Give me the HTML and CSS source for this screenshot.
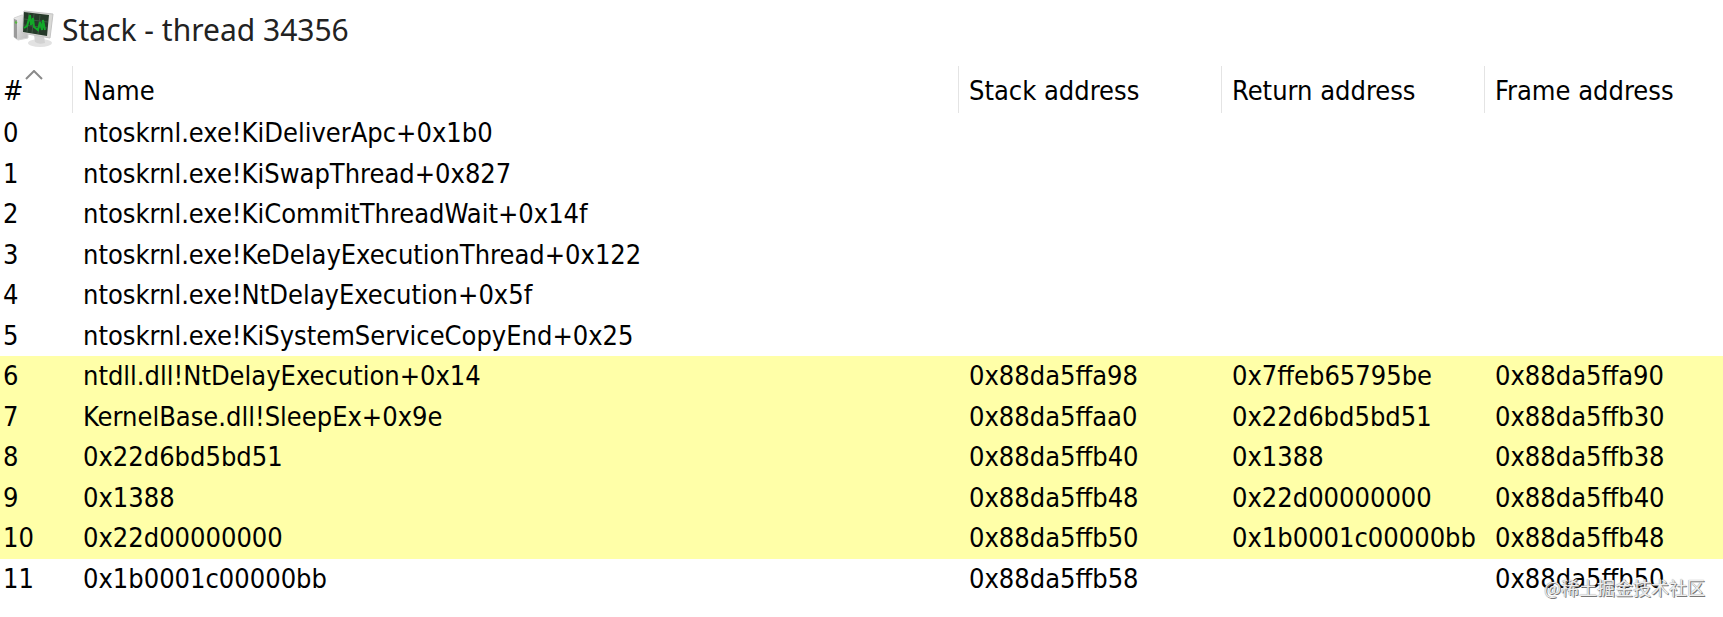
FILE: index.html
```html
<!DOCTYPE html>
<html lang="en">
<head>
  <meta charset="UTF-8" />
  <meta name="viewport" content="width=device-width, initial-scale=1.0" />
  <title>Stack - thread 34356</title>
  <link rel="stylesheet" href="styles.css">
</head>
<body>
  <!-- Title bar -->
  <header class="titlebar">
    <svg class="app-icon" viewBox="0 0 42 38" aria-hidden="true">
      <defs>
        <linearGradient id="caseFill" x1="0" x2="1" y1="0" y2="1">
          <stop offset="0" stop-color="#f0f0f0" />
          <stop offset="1" stop-color="#b9b9b9" />
        </linearGradient>
      </defs>
      <path d="M2 8 L10 5 L16 7 V28 L6 30 L2 27 Z" fill="url(#caseFill)" stroke="#d4d4d4" />
      <path d="M2 9 L5 10 V29 L2 27 Z" fill="#9a9a9a" />
      <path d="M3 12 L5 13" stroke="#58b840" stroke-width="2" />
      <ellipse cx="28" cy="33" rx="12" ry="4" fill="#e2e2e2" />
      <path d="M22 25 L32 26 L33 33 Q27 35 23 32 Z" fill="#d2d2d2" />
      <path d="M12 1 L41 4 L38 28 L10 23 Z" fill="#d9d9d6" stroke="#c4c4c4" />
      <path d="M12 2 L37 5 L35 26 L11 22 Z" fill="#263a2a" />
      <path d="M17 3 L15 22 M22 4 L20 23 M28 5 L26 24 M12 9 L36 12 M12 15 L35 18" stroke="#3d5943" stroke-width="1" />
      <path d="M12 18 L15 16 L17 9 L18 5 L19 15 L21 8 L22 17 L26 20 L28 12 L30 20 L31 10 L33 20" fill="none" stroke="#12a828" stroke-width="2" />
    </svg>
    <h1>Stack - thread 34356</h1>
  </header>

  <!-- Stack frames -->
  <main>
    <table class="stack">
      <colgroup>
        <col class="col-index">
        <col class="col-name">
        <col class="col-address">
        <col class="col-address">
        <col class="col-frame">
      </colgroup>
      <thead>
        <tr>
          <th scope="col" aria-sort="ascending">#<svg class="sort-arrow" viewBox="0 0 18 10" aria-hidden="true"><path d="M1 9 L9 1 L17 9" fill="none" stroke="#8a8a8a" stroke-width="2" /></svg></th>
          <th scope="col">Name</th>
          <th scope="col">Stack address</th>
          <th scope="col">Return address</th>
          <th scope="col">Frame address</th>
        </tr>
      </thead>
      <tbody>
        <tr><td>0</td><td>ntoskrnl.exe!KiDeliverApc+0x1b0</td><td></td><td></td><td></td></tr>
        <tr><td>1</td><td>ntoskrnl.exe!KiSwapThread+0x827</td><td></td><td></td><td></td></tr>
        <tr><td>2</td><td>ntoskrnl.exe!KiCommitThreadWait+0x14f</td><td></td><td></td><td></td></tr>
        <tr><td>3</td><td>ntoskrnl.exe!KeDelayExecutionThread+0x122</td><td></td><td></td><td></td></tr>
        <tr><td>4</td><td>ntoskrnl.exe!NtDelayExecution+0x5f</td><td></td><td></td><td></td></tr>
        <tr><td>5</td><td>ntoskrnl.exe!KiSystemServiceCopyEnd+0x25</td><td></td><td></td><td></td></tr>
        <tr class="user"><td>6</td><td>ntdll.dll!NtDelayExecution+0x14</td><td>0x88da5ffa98</td><td>0x7ffeb65795be</td><td>0x88da5ffa90</td></tr>
        <tr class="user"><td>7</td><td>KernelBase.dll!SleepEx+0x9e</td><td>0x88da5ffaa0</td><td>0x22d6bd5bd51</td><td>0x88da5ffb30</td></tr>
        <tr class="user"><td>8</td><td>0x22d6bd5bd51</td><td>0x88da5ffb40</td><td>0x1388</td><td>0x88da5ffb38</td></tr>
        <tr class="user"><td>9</td><td>0x1388</td><td>0x88da5ffb48</td><td>0x22d00000000</td><td>0x88da5ffb40</td></tr>
        <tr class="user"><td>10</td><td>0x22d00000000</td><td>0x88da5ffb50</td><td>0x1b0001c00000bb</td><td>0x88da5ffb48</td></tr>
        <tr><td>11</td><td>0x1b0001c00000bb</td><td>0x88da5ffb58</td><td></td><td>0x88da5ffb50</td></tr>
      </tbody>
    </table>
  </main>

  <div class="watermark" lang="zh-CN">@稀土掘金技术社区</div>
</body>
</html>
```

FILE: styles.css
```css
/* Global Styles */
* { box-sizing: border-box; margin: 0; padding: 0; }
body {
  position: relative;
  min-height: 100vh;
  font-family: "DejaVu Sans Condensed", "Noto Sans", sans-serif;
  font-size: 27px;
  line-height: 1.5;
  background-color: #fff;
  color: #000;
}
/* Title bar */
.titlebar {
  display: flex;
  align-items: center;
  gap: 8px;
  height: 66px;
  padding: 0 12px 8px;
}
.app-icon {
  width: 42px;
  height: 38px;
}
.titlebar h1 {
  font-family: "Noto Sans", sans-serif;
  font-size: 30px;
  font-weight: 400;
  color: #222;
}
/* Stack table */
.stack {
  width: 100%;
  table-layout: fixed;
  border-collapse: separate;
  border-spacing: 0;
}
.col-index { width: 72px; }
.col-address { width: 263px; }
.col-frame { width: 239px; }
.stack th {
  position: relative;
  height: 47px;
  padding-top: 3px;
  padding-left: 10px;
  border-left: 1px solid #e4e4e4;
  font-weight: 400;
  text-align: left;
}
.stack td {
  padding-left: 11px;
  white-space: nowrap;
}
.stack th:first-child,
.stack td:first-child {
  padding-left: 3px;
  border-left: 0;
}
.sort-arrow {
  position: absolute;
  top: 4px;
  left: 25px;
  width: 18px;
  height: 10px;
}
/* User mode frames */
.user { background-color: #ffffa8; }
/* Watermark */
.watermark {
  position: absolute;
  right: 18px;
  bottom: 16px;
  font-family: "Noto Sans CJK SC", sans-serif;
  font-size: 18px;
  color: #eee;
  text-shadow: 1px 1px 0 #777, 0 0 1px #777;
}
```
